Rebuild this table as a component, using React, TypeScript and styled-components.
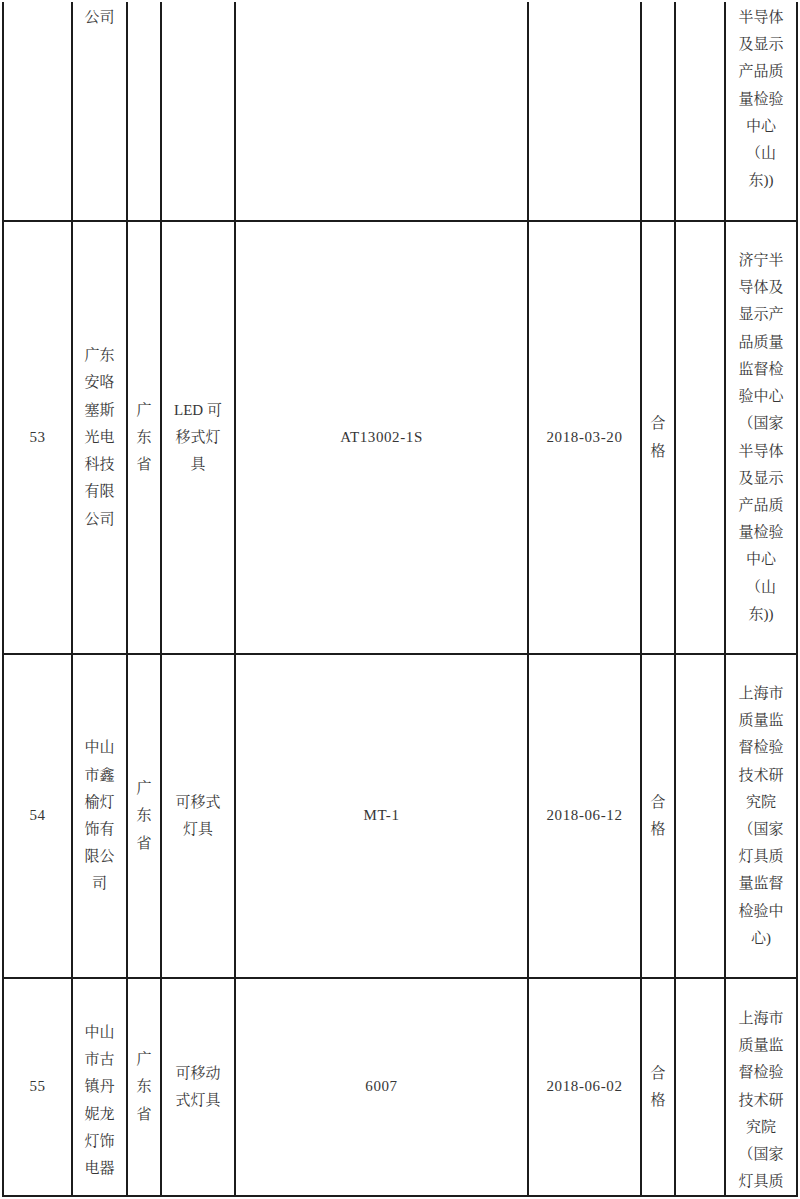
import React from "react";
import styled, { createGlobalStyle } from "styled-components";

const GlobalStyle = createGlobalStyle`
  html, body {
    margin: 0;
    padding: 0;
    background: #ffffff;
  }
`;

const COLUMNS = [69, 55, 34, 74, 293, 113, 34, 50, 72];

const Sheet = styled.div`
  display: grid;
  grid-template-columns: ${COLUMNS.map((w) => `${w}px`).join(" ")};
  grid-template-rows: 220px 433px 324px 218px;
  width: ${COLUMNS.reduce((a, b) => a + b, 0)}px;
  margin: 2px 0 0 2px;
  border-left: 2px solid #1c1c1c;
  font-family: "Liberation Serif", "Noto Serif CJK SC", "Noto Sans CJK SC", serif;
  font-size: 15px;
  line-height: 27.2px;
  color: #363636;
`;

const Cell = styled.div<{ $pad?: number }>`
  box-sizing: border-box;
  display: flex;
  flex-direction: column;
  align-items: center;
  justify-content: ${(p) => (p.$pad !== undefined ? "flex-start" : "center")};
  padding-top: ${(p) => p.$pad ?? 0}px;
  border-right: 2px solid #1c1c1c;
  border-bottom: 2px solid #1c1c1c;
  overflow: hidden;
  text-align: center;
`;

const Line = styled.span`
  display: block;
  white-space: pre;
`;

const Code = styled.span`
  display: block;
  white-space: pre;
  letter-spacing: 0.6px;
`;

type CellData = { lines: string[]; pad?: number; code?: boolean };

const c = (text: string | string[], pad?: number, code?: boolean): CellData => ({
  lines: Array.isArray(text) ? text : text ? [text] : [],
  pad,
  code,
});

const rows: CellData[][] = [
  [
    c(""),
    c(["公司"], 2),
    c(""),
    c(""),
    c(""),
    c(""),
    c(""),
    c(""),
    c(["半导体", "及显示", "产品质", "量检验", "中心", "（山", "东))"], 2),
  ],
  [
    c("53", undefined, true),
    c(["广东", "安咯", "塞斯", "光电", "科技", "有限", "公司"]),
    c(["广", "东", "省"]),
    c(["LED 可", "移式灯", "具"]),
    c("AT13002-1S", undefined, true),
    c("2018-03-20", undefined, true),
    c(["合", "格"]),
    c(""),
    c([
      "济宁半",
      "导体及",
      "显示产",
      "品质量",
      "监督检",
      "验中心",
      "（国家",
      "半导体",
      "及显示",
      "产品质",
      "量检验",
      "中心",
      "（山",
      "东))",
    ]),
  ],
  [
    c("54", undefined, true),
    c(["中山", "市鑫", "榆灯", "饰有", "限公", "司"]),
    c(["广", "东", "省"]),
    c(["可移式", "灯具"]),
    c("MT-1", undefined, true),
    c("2018-06-12", undefined, true),
    c(["合", "格"]),
    c(""),
    c([
      "上海市",
      "质量监",
      "督检验",
      "技术研",
      "究院",
      "（国家",
      "灯具质",
      "量监督",
      "检验中",
      "心)",
    ]),
  ],
  [
    c("55", undefined, true),
    c(["中山", "市古", "镇丹", "妮龙", "灯饰", "电器"], 40),
    c(["广", "东", "省"]),
    c(["可移动", "式灯具"]),
    c("6007", undefined, true),
    c("2018-06-02", undefined, true),
    c(["合", "格"]),
    c(""),
    c(["上海市", "质量监", "督检验", "技术研", "究院", "（国家", "灯具质"], 26),
  ],
];

const App: React.FC = () => {
  return (
    <>
      <GlobalStyle />
      <Sheet>
        {rows.map((row, r) =>
          row.map((cell, i) => (
            <Cell key={`${r}-${i}`} $pad={cell.pad}>
              {cell.lines.map((text, k) =>
                cell.code ? <Code key={k}>{text}</Code> : <Line key={k}>{text}</Line>
              )}
            </Cell>
          ))
        )}
      </Sheet>
    </>
  );
};

export default App;
